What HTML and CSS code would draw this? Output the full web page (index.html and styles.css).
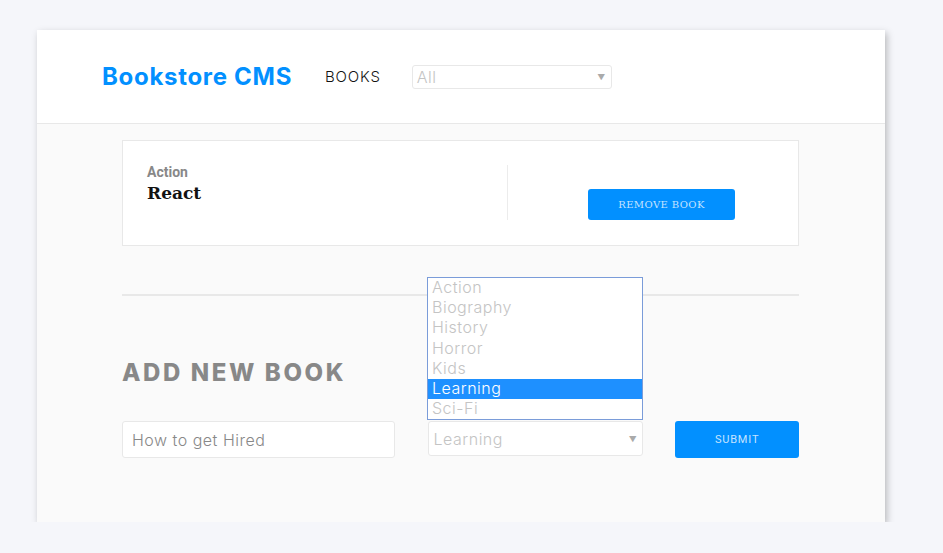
FILE: index.html
```html
<!DOCTYPE html>
<html>
<head>
<meta charset="utf-8">
<link rel="stylesheet" href="styles.css">
</head>
<body>
<div class="panel">
  <header class="header">
    <h1 class="logo">Bookstore CMS</h1>
    <nav class="nav">BOOKS</nav>
    <div class="select filter"><span>All</span><span class="arrow">▼</span></div>
  </header>
  <main class="content">
    <div class="card">
      <div class="info">
        <div class="category">Action</div>
        <div class="title">React</div>
      </div>
      <div class="divider"></div>
      <div class="actions">
        <button class="btn remove">REMOVE BOOK</button>
      </div>
    </div>
    <div class="rule"></div>
    <h2 class="form-title">ADD NEW BOOK</h2>
    <div class="form">
      <div class="input">How to get Hired</div>
      <div class="select cat"><span>Learning</span><span class="arrow">▼</span></div>
      <button class="btn submit">SUBMIT</button>
      <ul class="listbox">
        <li>Action</li>
        <li>Biography</li>
        <li>History</li>
        <li>Horror</li>
        <li>Kids</li>
        <li class="sel">Learning</li>
        <li>Sci-Fi</li>
      </ul>
    </div>
  </main>
</div>
</body>
</html>
```
FILE: styles.css
```css
* { box-sizing: border-box; }
body {
  margin: 0;
  background: #f5f6fa;
  font-family: Inter, "Open Sans", sans-serif;
}
.panel {
  margin: 30px 0 0 37px;
  width: 848px;
  background: #fafafa;
  box-shadow: 2px 3px 7px rgba(0,0,0,0.25);
}
.header {
  height: 94px;
  background: #fff;
  border-bottom: 1px solid #e8e8e8;
  display: flex;
  align-items: center;
  padding-left: 65px;
}
.logo {
  margin: 0;
  font-family: Inter, sans-serif;
  font-weight: 700;
  font-size: 24px;
  color: #0290ff;
  letter-spacing: 0.7px;
}
.nav {
  margin-left: 33px;
  font-size: 15px;
  font-weight: 300;
  color: #121212;
  letter-spacing: 0.8px;
}
.select {
  display: flex;
  align-items: center;
  justify-content: space-between;
  border: 1px solid #e8e8e8;
  border-radius: 3px;
  background: #fff;
  color: #c4c4c4;
  font-weight: 300;
  font-size: 16px;
  letter-spacing: 0.5px;
  padding: 0 5px 0 5px;
}
.arrow {
  font-size: 8px;
  color: #aaa;
}
.filter {
  margin-left: 31px;
  width: 200px;
  height: 24px;
  padding-left: 4px;
}
.content {
  padding: 16px 86px 64px 85px;
  position: relative;
}
.card {
  display: flex;
  background: #fff;
  border: 1px solid #e8e8e8;
  padding: 24px 0 25px 24px;
}
.info {
  width: 360px;
}
.category {
  margin-top: 0;
  font-family: Roboto, sans-serif;
  font-weight: 700;
  font-size: 14px;
  line-height: 15px;
  color: #888;
}
.title {
  font-family: "DejaVu Serif", serif;
  font-weight: 700;
  font-size: 17px;
  line-height: 22px;
  color: #121212;
  margin-top: 2px;
}
.divider {
  width: 1px;
  height: 55px;
  background: #ececec;
}
.actions {
  padding: 24px 0 0 80px;
}
.btn {
  border: none;
  border-radius: 3px;
  background: #0290ff;
  color: #c5e3ff;
  font-family: "DejaVu Serif", serif;
  font-weight: 300;
  font-size: 10px;
  letter-spacing: 0.4px;
}
.remove {
  width: 147px;
  height: 31px;
}
.rule {
  margin-top: 48px;
  height: 2px;
  background: #e8e8e8;
}
.form-title {
  margin: 62px 0 0 0;
  font-family: Inter, sans-serif;
  font-weight: 800;
  font-size: 24px;
  line-height: 29px;
  color: #888;
  letter-spacing: 2.6px;
}
.form {
  position: relative;
  display: flex;
  align-items: flex-start;
  margin-top: 34px;
}
.input {
  width: 273px;
  height: 37px;
  background: #fff;
  border: 1px solid #e8e8e8;
  border-radius: 3px;
  padding-left: 9px;
  display: flex;
  align-items: center;
  font-size: 16px;
  font-weight: 300;
  letter-spacing: 0.5px;
  color: #888;
}
.cat {
  margin-left: 33px;
  width: 216px;
  height: 35px;
}
.submit {
  margin-left: 32px;
  width: 124px;
  height: 37px;
  font-family: Roboto, sans-serif;
  font-weight: 400;
  font-size: 11px;
  letter-spacing: 0.8px;
}
.listbox {
  position: absolute;
  left: 305px;
  top: -144px;
  width: 216px;
  margin: 0;
  padding: 0;
  list-style: none;
  background: #fff;
  border: 1px solid #7a9cd9;
}
.listbox li {
  height: 20.2px;
  line-height: 19px;
  padding-left: 4px;
  font-size: 16px;
  font-weight: 300;
  letter-spacing: 0.5px;
  color: #c4c4c4;
}
.listbox li.sel {
  background: #1e90ff;
  color: #fff;
}
```
